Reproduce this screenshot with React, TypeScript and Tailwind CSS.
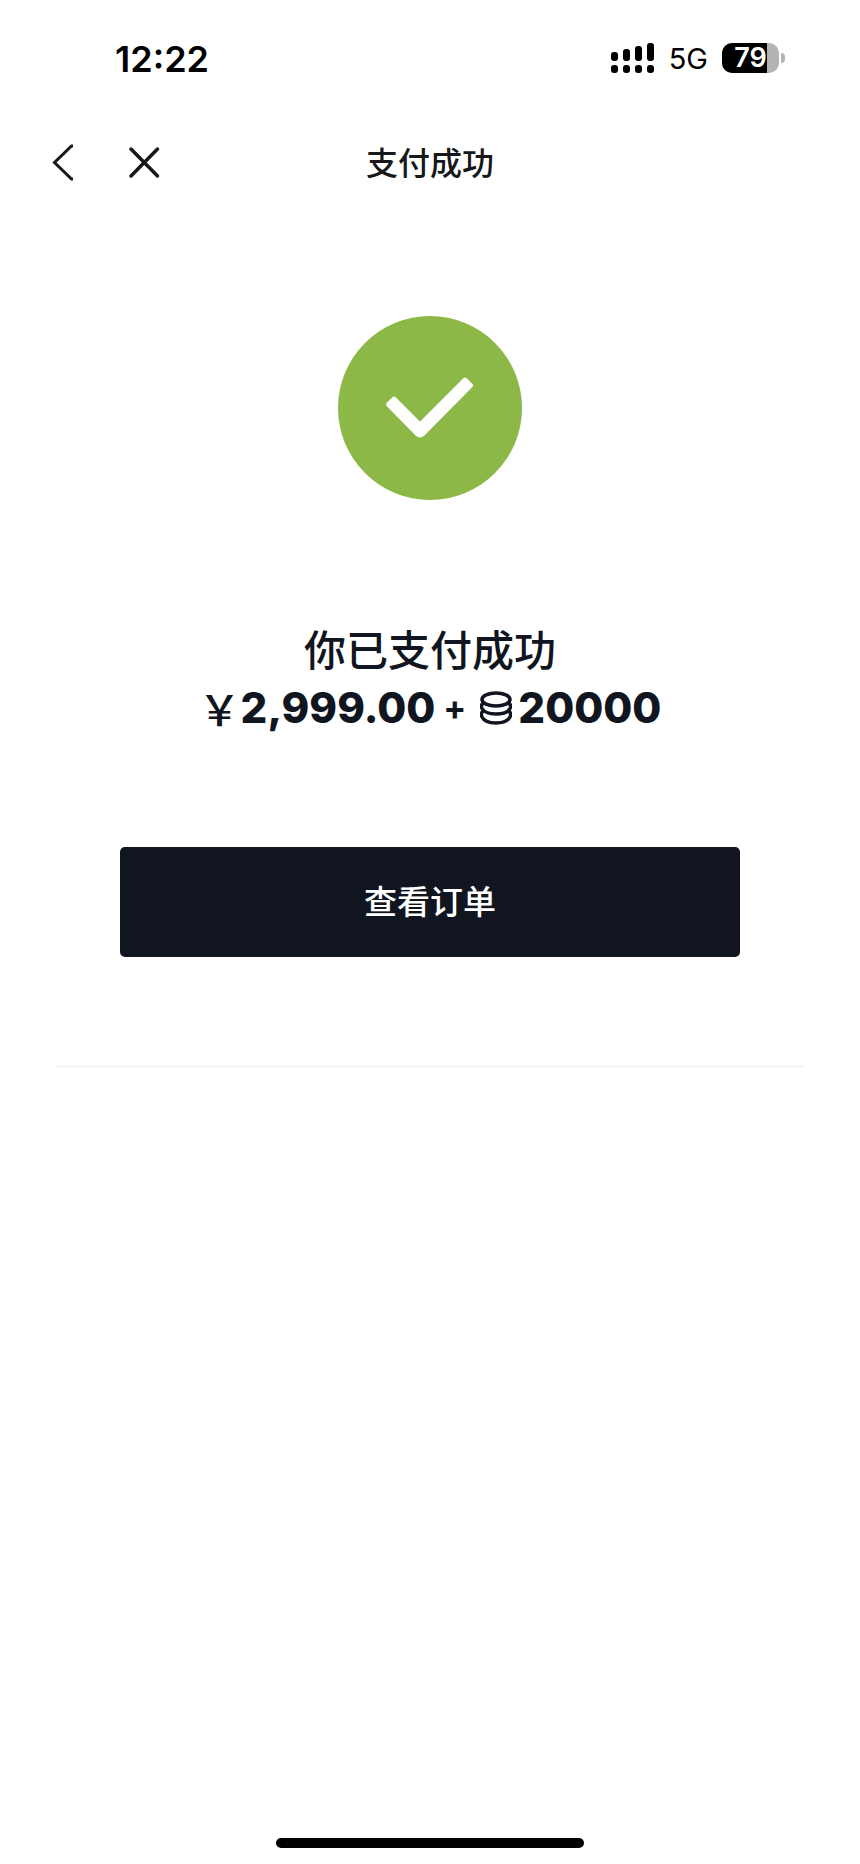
const signalBars = ['h-[9px]', 'h-[12px]', 'h-[15px]', 'h-[18px]']

function SignalIcon() {
  return (
    <div className="flex h-[30px] items-end gap-[5px]" aria-hidden="true">
      {signalBars.map((height) => (
        <div key={height} className="flex flex-col gap-[4px]">
          <span className={`w-[7px] rounded-[3px] bg-black ${height}`} />
          <span className="h-[8px] w-[7px] rounded-[3px] bg-black" />
        </div>
      ))}
    </div>
  )
}

function Battery({ level }: { level: number }) {
  return (
    <div className="flex items-center gap-[2px]">
      <div className="relative flex h-[30px] w-[57px] items-center justify-center rounded-[10px] bg-[#b3b3b3]">
        <span className="absolute inset-y-0 left-0 rounded-l-[10px] bg-black" style={{ width: `${level}%` }} />
        <span className="relative text-[27px] leading-[36px] font-semibold text-white">{level}</span>
      </div>
      <span className="h-[10px] w-[4px] rounded-r-full bg-[#b3b3b3]" />
    </div>
  )
}

function StatusBar() {
  return (
    <div className="flex items-center justify-between pt-[36px] pr-[75px] pl-[115px] text-black">
      <span className="pt-[2px] text-[36px] leading-[42px] font-semibold">12:22</span>
      <div className="flex items-center">
        <SignalIcon />
        <span className="mr-[14px] ml-[15px] pt-[2px] text-[29px] leading-[36px]">5G</span>
        <Battery level={79} />
      </div>
    </div>
  )
}

function NavBar() {
  return (
    <header className="mt-[56px] grid grid-cols-3 items-center px-[48px] text-[#181818]">
      <div className="flex items-center gap-[44px]">
        <button type="button" aria-label="返回">
          <svg width="32" height="40" viewBox="0 0 32 40" fill="none" stroke="currentColor" strokeWidth="3">
            <path d="M25 4H23.500L6.500 20.500 23.500 37H25" />
          </svg>
        </button>
        <button type="button" aria-label="关闭">
          <svg width="40" height="40" viewBox="0 0 40 40" fill="none" stroke="currentColor" strokeWidth="3.5" strokeLinecap="round">
            <path d="M7 7 33.500 34M33.500 7 7 34" />
          </svg>
        </button>
      </div>
      <h1 className="pt-[4px] text-center text-[32px] leading-[48px] font-medium">支付成功</h1>
    </header>
  )
}

function SuccessIcon() {
  return (
    <svg width="184" height="184" viewBox="0 0 184 184" aria-hidden="true">
      <circle cx="92" cy="92" r="92" fill="#8bb846" />
      <path
        d="M50 88.500 56 82.500 82 108.500 127 63.500 133 69.500 84.500 118.500Q82 120.500 79.500 118.500Z"
        fill="#fff"
        stroke="#fff"
        strokeWidth="4"
        strokeLinejoin="round"
      />
    </svg>
  )
}

function CoinsIcon() {
  return (
    <svg width="32" height="34" viewBox="0 0 32 34" fill="none" stroke="currentColor" strokeWidth="3.5" aria-hidden="true">
      <ellipse cx="16" cy="8.500" rx="14" ry="6.500" />
      <path d="M3 12.500C1 14 1.200 16 2 17.500 4 21 9.500 23 16 23s12-2 14-5.500c.8-1.500 1-3.500-1-5" />
      <path d="M3 20C1 22 1.200 24.500 2 26c2 4 7.500 6 14 6s12-2 14-6c.8-1.500 1-4-1-6" />
    </svg>
  )
}

export default function App() {
  return (
    <div className="flex min-h-screen flex-col bg-white font-['Inter','Noto_Sans_CJK_SC',sans-serif]">
      <StatusBar />
      <NavBar />

      <main className="flex flex-col items-center text-[#101520]">
        <div className="mt-[128px]">
          <SuccessIcon />
        </div>

        <h2 className="mt-[121px] text-[42px] leading-[60px] font-medium">你已支付成功</h2>
        <p className="flex items-center text-[42px] leading-[54px] font-extrabold">
          <span className="font-['Noto_Sans_CJK_SC',sans-serif] font-medium">￥</span>
          <span>2,999.00</span>
          <span className="mr-[14px] ml-[8px] text-[34px] font-bold">+</span>
          <span className="mr-[6px]">
            <CoinsIcon />
          </span>
          <span>20000</span>
        </p>

        <div className="mt-[112px] w-full px-[120px]">
          <button
            type="button"
            className="h-[110px] w-full rounded-[5px] bg-[#101520] text-[33px] leading-[48px] font-medium text-white"
          >
            查看订单
          </button>
        </div>
      </main>

      <div className="mx-[56px] mt-[109px] border-t border-[#eeeeee]" />

      <div className="mx-auto mt-auto mb-[16px] h-[10px] w-[308px] rounded-full bg-black" />
    </div>
  )
}
